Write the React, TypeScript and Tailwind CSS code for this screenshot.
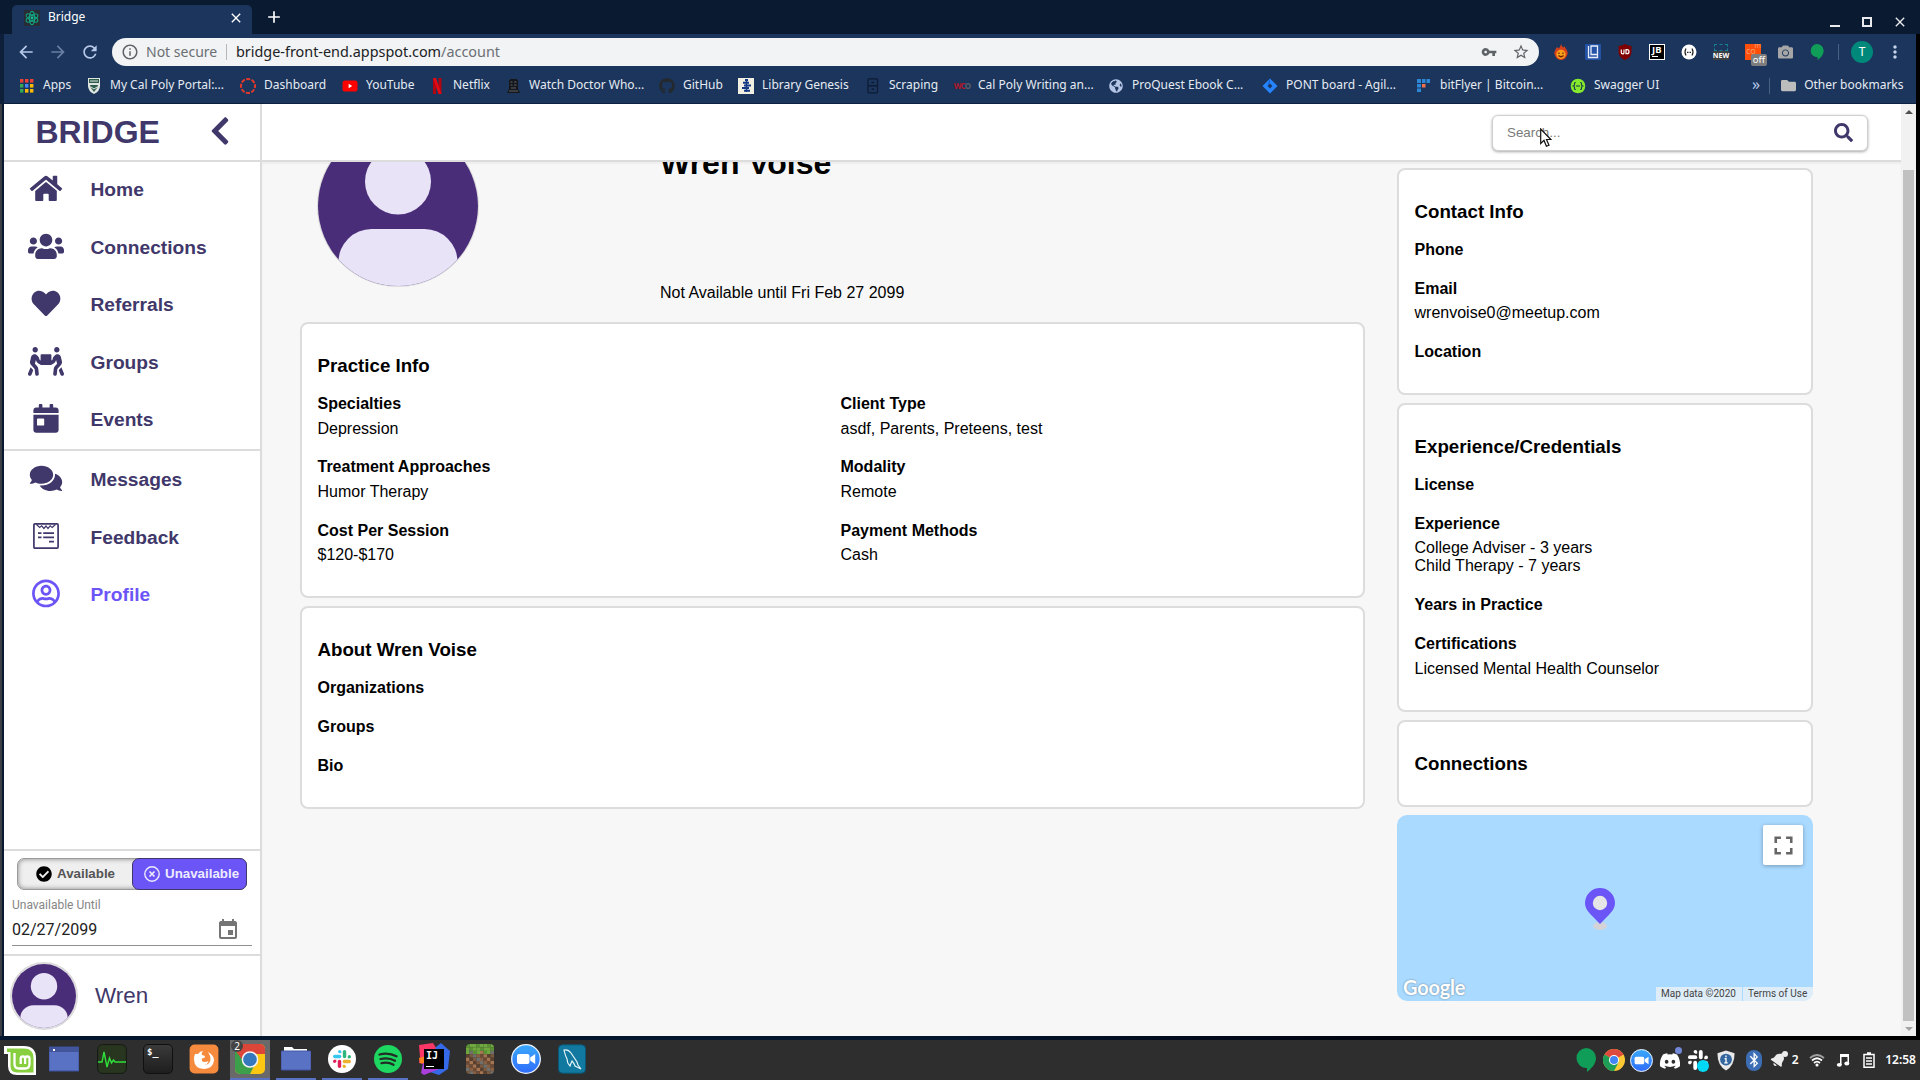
import React from "react";
import {
  FaHome, FaUsers, FaHeart, FaPeopleCarry, FaCalendarDay, FaComments, FaRegUserCircle, FaChevronLeft,
  FaSearch, FaCheckCircle, FaGithub, FaBluetoothB, FaDiscord, FaFolder, FaGlobeAmericas, FaCamera, FaBell,
} from "react-icons/fa";
import {
  MdArrowBack, MdArrowForward, MdRefresh, MdStarBorder, MdVpnKey, MdInfoOutline, MdMoreVert, MdFullscreen,
  MdEvent, MdClose, MdAdd,
} from "react-icons/md";

const SANS = "font-['Liberation_Sans',Arial,sans-serif]";
const NOTO = "font-['Noto_Sans',sans-serif]";

/* ---------- small drawings ---------- */

function ReactFavicon() {
  return (
    <svg viewBox="0 0 16 16" className="h-4 w-4">
      <rect width="16" height="16" fill="#282c34" />
      <g fill="none" stroke="#12a37f" strokeWidth="1.1">
        <ellipse cx="8" cy="8" rx="6.6" ry="2.6" transform="rotate(30 8 8)" />
        <ellipse cx="8" cy="8" rx="6.6" ry="2.6" transform="rotate(90 8 8)" />
        <ellipse cx="8" cy="8" rx="6.6" ry="2.6" transform="rotate(150 8 8)" />
      </g>
      <circle cx="8" cy="8" r="1.4" fill="#19c39a" />
    </svg>
  );
}

function AppsGrid() {
  const colors = ["#ea4335", "#ea4335", "#ea4335", "#34a853", "#4285f4", "#fbbc05", "#34a853", "#fbbc05", "#fbbc05"];
  return (
    <svg viewBox="0 0 16 16" className="h-4 w-4">
      {colors.map((c, i) => (
        <rect key={i} x={1 + (i % 3) * 5} y={1 + Math.floor(i / 3) * 5} width="3.4" height="3.6" fill={c} />
      ))}
    </svg>
  );
}

function CalPoly() {
  return (
    <svg viewBox="0 0 16 16" className="h-4 w-4">
      <path d="M2 0h12v8q0 5-6 8-6-3-6-8z" fill="#dfe6e0" />
      <path d="M3 1h10v4H3z" fill="#2d5c4c" />
      <path d="M4 3h8" stroke="#dfe6e0" strokeWidth="1" />
      <path d="M4 7h8l-1 3-3 4-3-4z" fill="#2d5c4c" />
      <path d="M5 9l3 2 3-2" stroke="#dfe6e0" fill="none" />
    </svg>
  );
}

function CanvasRing() {
  return (
    <svg viewBox="0 0 16 16" className="h-4 w-4">
      <circle cx="8" cy="8" r="7" fill="none" stroke="#e4392b" strokeWidth="2" strokeDasharray="4.1 1.4" strokeDashoffset="2" />
    </svg>
  );
}

function YouTubeIcon() {
  return (
    <svg viewBox="0 0 16 16" className="h-4 w-4">
      <rect x="0.5" y="2.5" width="15" height="11" rx="2.6" fill="#f00" />
      <path d="M6.6 5.8v4.4L10.2 8z" fill="#fff" />
    </svg>
  );
}

function NetflixIcon() {
  return (
    <svg viewBox="0 0 16 16" className="h-4 w-4">
      <path d="M4 0h3v16H4zM9.5 0h3v16h-3z" fill="#b1060f" />
      <path d="M4 0h3l5.5 16h-3z" fill="#e50914" />
    </svg>
  );
}

function TardisIcon() {
  return (
    <svg viewBox="0 0 16 16" className="h-4 w-4">
      <path d="M5 1h7v1h1v9l2 4H2l2-4V2h1z" fill="#15171b" />
      <path d="M5.5 4h2M9 4h2.5M5.5 7h2M9 7h2.5M4 13h9M6 10h5" stroke="#61656b" strokeWidth="1" />
    </svg>
  );
}

function LibGen() {
  return (
    <svg viewBox="0 0 16 16" className="h-4 w-4">
      <rect width="16" height="16" fill="#f1efe2" />
      <path d="M7 2h3M5 4.800h6M6 7.500h7M4 10h7M6 12.800h6" stroke="#123a86" strokeWidth="1.900" />
      <path d="M8.500 1v13" stroke="#123a86" strokeWidth="1.500" />
    </svg>
  );
}

function Cabinet() {
  return (
    <svg viewBox="0 0 16 16" className="h-4 w-4">
      <rect x="3" y=".8" width="9.5" height="14" rx=".8" fill="none" stroke="#0d1c33" strokeWidth="1.2" />
      <path d="M3 7.8h9.5M6.5 4.5h2.6M6.5 11.2h2.6" stroke="#0d1c33" strokeWidth="1.5" />
    </svg>
  );
}

function JiraIcon() {
  return (
    <svg viewBox="0 0 16 16" className="h-4 w-4">
      <path d="M8 .5L15.5 8 8 15.5.5 8z" fill="#2684ff" />
      <path d="M8 5.4L10.4 8 8 10.6 5.6 8z" fill="#1b355c" />
      <path d="M8 .5v5L5 8.3z" fill="#1765d8" />
    </svg>
  );
}

function BitFlyer() {
  return (
    <svg viewBox="0 0 16 16" className="h-4 w-4">
      <path d="M1 1h4v4H1zM6 1h3.5v4H6zM10.500 1H14v4h-3.500zM1 6h4v3.500H1zM1 10.500h4V14H1z" fill="#2e86d6" />
      <rect x="6" y="6" width="3.5" height="3.500" fill="#f1714f" />
    </svg>
  );
}

function Swagger() {
  return (
    <svg viewBox="0 0 16 16" className="h-4 w-4">
      <circle cx="8" cy="8" r="7.3" fill="#85ea2d" />
      <path d="M5.800 4.500q-1.500 0-1.300 1.700 0 1.500-1 1.800 1 .3 1 1.800-.2 1.700 1.300 1.700M10.200 4.500q1.500 0 1.300 1.700 0 1.500 1 1.800-1 .3-1 1.800.2 1.700-1.300 1.700M6 8h4" fill="none" stroke="#173647" strokeWidth="1.100" />
    </svg>
  );
}

function WcoIcon() {
  return (
    <span className="flex h-4 w-4 items-center justify-center text-[8px] leading-4 font-bold tracking-[-0.8px] text-[#b1172a]">
      WC<span className="text-[#5a6068]">O</span>
    </span>
  );
}

function Person({ className }: { className: string }) {
  return (
    <svg viewBox="0 0 160 160" className={className}>
      <rect width="160" height="160" fill="#4a2d78" />
      <circle cx="80" cy="55.500" r="33" fill="#e9e3f8" />
      <rect x="20.500" y="103" width="119" height="90" rx="33" fill="#e9e3f8" />
    </svg>
  );
}

function FeedbackIcon() {
  return (
    <svg viewBox="0 0 26 26" className="h-[26px] w-[26px]" fill="none" stroke="#40376a">
      <rect x=".9" y=".9" width="24.200" height="24.200" rx="1" strokeWidth="1.700" />
      <path d="M3.500 1.500l3.200 3 2-1.600 2.200 2.600L13 3l2 2.500 2.200-2.600 2 1.600 3.200-3" strokeWidth="1.200" />
      <path d="M5 10.200h3.500M10.200 10.200H21M5 14.400h3.500M10.200 14.400H21M16 18.700h5" strokeWidth="1.700" />
    </svg>
  );
}

function ZoomIcon({ className }: { className: string }) {
  return (
    <svg viewBox="0 0 30 30" className={className}>
      <defs>
        <linearGradient id="zoomBlue" x1="0" y1="0" x2="0" y2="1">
          <stop offset="0" stopColor="#3aa9fb" />
          <stop offset="1" stopColor="#2f6cfb" />
        </linearGradient>
      </defs>
      <circle cx="15" cy="15" r="14.300" fill="url(#zoomBlue)" stroke="#f1f6ff" strokeWidth="1.300" />
      <rect x="6" y="10" width="12.500" height="10" rx="2" fill="#fff" />
      <path d="M19.200 13.400l5-3.400v10l-5-3.400z" fill="#fff" />
    </svg>
  );
}

function ChromeLogo({ className }: { className: string }) {
  return (
    <svg viewBox="0 0 22 22" className={className}>
      <circle cx="11" cy="11" r="11" fill="#fcc934" />
      <path d="M11 11L1.470 5.500A11 11 0 0 1 20.530 5.500z" fill="#dd4b3e" />
      <path d="M11 11L1.470 5.500A11 11 0 0 0 11 22l4.500-8.500z" fill="#1e9e57" />
      <path d="M11 6h9.800l-.3-.6L11 5z" fill="#dd4b3e" />
      <circle cx="11" cy="11" r="5" fill="#fff" />
      <circle cx="11" cy="11" r="4" fill="#4285f4" />
    </svg>
  );
}

function Slack({ className, mono }: { className: string; mono?: boolean }) {
  const colors = mono ? ["#fff", "#fff", "#fff", "#fff"] : ["#36c5f0", "#2eb67d", "#ecb22e", "#e01e5a"];
  return (
    <svg viewBox="0 0 20 20" className={className}>
      {colors.map((color, i) => (
        <g key={i} fill={color} transform={`rotate(${i * 90} 10 10)`}>
          <rect x="5.600" y="0" width="3.600" height="3.600" rx="1.800" />
          <path d="M7.400 1.800h1.800v1.800H7.400z" />
          <rect x="0" y="5.300" width="9.200" height="3.800" rx="1.900" />
        </g>
      ))}
    </svg>
  );
}

function Hangouts({ className }: { className: string }) {
  return (
    <svg viewBox="0 0 20 24" className={className}>
      <path d="M10 0a10 10 0 0 1 10 10c0 6-5 11-9 14v-4A10 10 0 1 1 10 0z" fill="#0f9d58" />
    </svg>
  );
}

/* ---------- browser chrome ---------- */

function TabStrip() {
  return (
    <div className="flex h-[34px] shrink-0 items-end bg-[#0a1a31]">
      <div className="ml-3 flex h-[29px] w-[240px] items-center rounded-t-[5px] bg-[#1b355c] pl-3 text-white">
        <span className="pb-1">
          <ReactFavicon />
        </span>
        <span className="ml-2 flex-1 pb-[5px] text-[12px] leading-4">Bridge</span>
        <MdClose className="mr-2 mb-1 h-4 w-4" />
      </div>
      <MdAdd className="mb-[7px] ml-3 h-5 w-5 text-white" />
      <div className="flex-1" />
      <div className="mr-3 mb-1 flex items-center text-[#e8eaee]">
        <span className="mt-[7px] mr-[22px] h-[2px] w-[10px] bg-[#e8eaee]" />
        <span className="mr-[20px] h-[10px] w-[10px] border-2 border-[#e8eaee]" />
        <MdClose className="h-4 w-4" />
      </div>
    </div>
  );
}

function Extensions() {
  const cell = "flex w-8 justify-center";
  return (
    <div className="flex items-center">
      <div className={cell}>
        <svg viewBox="0 0 16 16" className="h-4 w-4">
          <path d="M8 0q.5 2.500 2.500 3.500L12 2q-.3 2 1.500 3.500 2 3 .5 6-2 4.500-6 4.500t-6-4.500q-1.500-3 .5-6L4 3l1.500 1.500Q7.500 3 8 0z" fill="#d8401c" />
          <circle cx="8" cy="10.300" r="4.600" fill="#f9a01b" />
          <path d="M6 8.500v1.500M10 8.500v1.500M5.500 11.500q2.500 2.500 5 0" stroke="#6b1b0c" strokeWidth="1.200" fill="none" />
        </svg>
      </div>
      <div className={cell}>
        <svg viewBox="0 0 16 16" className="h-4 w-4">
          <rect width="16" height="16" rx="1" fill="#2453a5" />
          <path d="M3.500 2v11.500h9V2H6v8.500h6.500" fill="none" stroke="#e9eefa" strokeWidth="1.300" />
        </svg>
      </div>
      <div className={cell}>
        <svg viewBox="0 0 16 16" className="h-4 w-4">
          <path d="M8 0q3 2 6.500 2v6q0 5-6.500 8-6.500-3-6.500-8V2Q5 2 8 0z" fill="#800000" />
          <path d="M4.300 5.500v3q0 1.300 1.400 1.300T7 8.500v-3M9 5.700h1q2 0 2 2t-2 2H9z" fill="none" stroke="#fff" strokeWidth="1.200" />
        </svg>
      </div>
      <div className={cell}>
        <span className="relative h-4 w-4 border border-white bg-black pl-[2px] text-[9.500px] leading-[9px] font-bold text-white">
          JB
          <span className="absolute bottom-[2px] left-[2px] h-px w-[6px] bg-white" />
        </span>
      </div>
      <div className={cell}>
        <svg viewBox="0 0 16 16" className="h-4 w-4">
          <circle cx="8" cy="8" r="7.500" fill="#fff" />
          <path d="M5 4.500Q3 8 5 11.500M11 4.500q2 3.500 0 7" stroke="#222" strokeWidth="1.200" fill="none" />
          <path d="M6 8.300h4" stroke="#222" strokeWidth="1.200" strokeDasharray="1 .5" />
        </svg>
      </div>
      <div className={cell}>
        <span className="flex h-4 w-4 flex-col items-center">
          <span className="h-[7px] w-[14px] border border-dashed border-[#168093]" />
          <span className="flex h-[9px] w-4 items-center justify-center bg-[#3c4043] text-[7px] leading-[9px] font-bold text-white">NEW</span>
        </span>
      </div>
      <div className={cell}>
        <span className="relative h-4 w-4 bg-[#ff4f0a] text-[9px] leading-[10px] text-[#ff9a6d]">
          <span className="absolute top-[3px] left-px leading-[8px]">co</span>
          <span className="absolute -top-[2px] right-0 text-[7px] leading-[8px]">m</span>
          <span className="absolute top-[10px] left-[6px] flex h-3 w-4 items-center justify-center rounded-[2px] bg-[#7d7d7d] text-[9.500px] leading-3 text-white">off</span>
        </span>
      </div>
      <div className={cell}>
        <FaCamera className="h-4 w-[15px] text-[#a6a6a6]" />
      </div>
      <div className={cell}>
        <Hangouts className="h-4 w-[14px]" />
      </div>
      <span className="ml-[5px] h-4 w-px bg-[#4a6083]" />
      <span className="ml-3 flex h-[22px] w-[22px] items-center justify-center rounded-full bg-[#00897b] text-[12px] leading-none text-white">T</span>
      <MdMoreVert className="ml-3 h-5 w-5 text-[#c6d3ea]" />
    </div>
  );
}

function Toolbar() {
  return (
    <div className="flex h-9 shrink-0 items-center text-[#b7c9ea]">
      <MdArrowBack className="ml-3 h-5 w-5" />
      <MdArrowForward className="ml-3 h-5 w-5 opacity-50" />
      <MdRefresh className="ml-3 h-5 w-5" />
      <div className="ml-3 flex h-7 w-[1427px] items-center rounded-full bg-[#f1f3f4] text-[14px] leading-5 text-[#6b6f74]">
        <MdInfoOutline className="ml-[9px] h-[18px] w-[18px] text-[#5f6368]" />
        <span className="ml-[7px] w-[73px]">Not secure</span>
        <span className="ml-[7px] h-4 w-px bg-[#b4b7bb]" />
        <span className="ml-[9px] text-[14.400px] text-[#202124]">
          bridge-front-end.appspot.com<span className="text-[#6b6f74]">/account</span>
        </span>
        <span className="flex-1" />
        <MdVpnKey className="h-4 w-4 text-[#5f6368]" />
        <MdStarBorder className="mr-[9px] ml-[15px] h-[18px] w-[18px] text-[#5f6368]" />
      </div>
      <div className="ml-[6px]">
        <Extensions />
      </div>
    </div>
  );
}

const bookmarks: { label: string; w: string; icon: React.ReactNode }[] = [
  { label: "Apps", w: "w-[67px]", icon: <AppsGrid /> },
  { label: "My Cal Poly Portal:...", w: "w-[154px]", icon: <CalPoly /> },
  { label: "Dashboard", w: "w-[102px]", icon: <CanvasRing /> },
  { label: "YouTube", w: "w-[87px]", icon: <YouTubeIcon /> },
  { label: "Netflix", w: "w-[76px]", icon: <NetflixIcon /> },
  { label: "Watch Doctor Who...", w: "w-[154px]", icon: <TardisIcon /> },
  { label: "GitHub", w: "w-[79px]", icon: <FaGithub className="h-4 w-4 text-[#24292e]" /> },
  { label: "Library Genesis", w: "w-[127px]", icon: <LibGen /> },
  { label: "Scraping", w: "w-[89px]", icon: <Cabinet /> },
  { label: "Cal Poly Writing an...", w: "w-[154px]", icon: <WcoIcon /> },
  { label: "ProQuest Ebook C...", w: "w-[154px]", icon: <FaGlobeAmericas className="mx-px h-[14px] w-[14px] text-[#b4c5e6]" /> },
  { label: "PONT board - Agil...", w: "w-[154px]", icon: <JiraIcon /> },
  { label: "bitFlyer | Bitcoin...", w: "w-[154px]", icon: <BitFlyer /> },
  { label: "Swagger UI", w: "w-[182px]", icon: <Swagger /> },
];

function Bookmarks() {
  return (
    <div className="flex h-[34px] shrink-0 items-center border-b border-[#0f2140] pb-[2px] pl-[15px] text-[12px] leading-4 whitespace-nowrap text-[#e6ebf3]">
      {bookmarks.map((b) => (
        <div key={b.label} className={`flex shrink-0 items-center gap-2 ${b.w}`}>
          <span className="shrink-0">{b.icon}</span>
          <span className="pb-px">{b.label}</span>
        </div>
      ))}
      <span className="pb-1 text-[16px] text-[#b7c9ea]">»</span>
      <span className="ml-[9px] h-4 w-px bg-[#4a6083]" />
      <FaFolder className="ml-[11px] h-[15px] w-[15px] text-[#bdbdbd]" />
      <span className="ml-2 pb-px">Other bookmarks</span>
    </div>
  );
}

/* ---------- page ---------- */

function NavItem({ icon, label, active }: { icon: React.ReactNode; label: string; active?: boolean }) {
  return (
    <div className={`flex h-[57.500px] items-center ${active ? "text-[#6b55f7]" : "text-[#40376a]"}`}>
      <span className="ml-6 flex w-9 justify-center">{icon}</span>
      <span className="mt-[3px] ml-[26.500px] text-[19.200px] leading-[22px] font-bold">{label}</span>
    </div>
  );
}

const navIcon = "h-[28.800px] w-9";

function Sidebar() {
  return (
    <aside className="flex w-[258px] shrink-0 flex-col border-r-2 border-[#dcdcdc] bg-white shadow-[1px_0_3px_rgba(0,0,0,0.12)]">
      <div className="flex h-[58px] shrink-0 items-center border-b-2 border-[#dcdcdc] text-[#40376a]">
        <span className="ml-[31.500px] w-[174px] text-[32px] leading-9 font-bold">BRIDGE</span>
        <FaChevronLeft className="h-8 w-5 -translate-y-px" />
      </div>
      <div className="-mt-[2px] h-[291px] shrink-0 border-b-2 border-[#dcdcdc]">
        <NavItem icon={<FaHome className={navIcon} />} label="Home" />
        <NavItem icon={<FaUsers className={navIcon} />} label="Connections" />
        <NavItem icon={<FaHeart className={navIcon} />} label="Referrals" />
        <NavItem icon={<FaPeopleCarry className={navIcon} />} label="Groups" />
        <NavItem icon={<FaCalendarDay className={navIcon} />} label="Events" />
      </div>
      <div className="-mt-px flex-1">
        <NavItem icon={<FaComments className={navIcon} />} label="Messages" />
        <NavItem icon={<FeedbackIcon />} label="Feedback" />
        <NavItem icon={<FaRegUserCircle className={navIcon} />} label="Profile" active />
      </div>
      <div className="h-[105px] shrink-0 border-t-2 border-[#dcdcdc] pt-[7px]">
        <div className="ml-[13px] flex h-8 w-[230px] rounded-[7px] border border-[#9b9b9b] bg-[#efefef] text-[13.333px] font-bold shadow-[inset_0_0_5px_rgba(0,0,0,0.45)]">
          <div className="flex w-[114px] items-center pl-[18px] text-[#555]">
            <FaCheckCircle className="mr-[5px] h-4 w-4 text-black" />
            Available
          </div>
          <div className="-my-px -mr-px flex w-[115px] flex-1 items-center rounded-[7px] border border-[#40376a] bg-[#6b55f7] pl-[11px] text-[#eeebff]">
            <svg viewBox="0 0 16 16" className="mr-[5px] h-4 w-4 shrink-0" fill="none" stroke="currentColor">
              <circle cx="8" cy="8" r="7.200" strokeWidth="1.400" />
              <path d="M5.500 5.500l5 5M10.500 5.500l-5 5" strokeWidth="1.700" />
            </svg>
            Unavailable
          </div>
        </div>
        <div className="mr-2 ml-2 h-[56px] border-b border-[#8f8f8f] font-['Roboto',sans-serif]">
          <div className="pt-[7px] text-[12px] leading-4 text-[#858585]">Unavailable Until</div>
          <div className="mt-[5px] flex items-center justify-between pr-[12px] text-[16px] leading-6 text-[#212121]">
            02/27/2099
            <MdEvent className="h-6 w-6 text-[#757575]" />
          </div>
        </div>
      </div>
      <div className="flex h-[82px] shrink-0 items-center border-t-2 border-[#dcdcdc] pl-[6px]">
        <div className="h-[68px] w-[68px] overflow-hidden rounded-full border-2 border-[#dcdcdc]">
          <Person className="h-16 w-16" />
        </div>
        <span className="ml-[17px] text-[22.400px] leading-7 text-[#40376a]">Wren</span>
      </div>
    </aside>
  );
}

function Field({ label, values = [] }: { label: string; values?: string[] }) {
  return (
    <div className="mb-[20.800px] text-[16px] leading-[18px] text-black">
      <div className="font-bold">{label}</div>
      {values.length > 0 && (
        <div className="mt-[6.600px]">
          {values.map((v) => (
            <div key={v}>{v}</div>
          ))}
        </div>
      )}
    </div>
  );
}

function Card({ title, className, children }: { title: string; className: string; children?: React.ReactNode }) {
  return (
    <section className={`shrink-0 rounded-lg border-2 border-[#dcdcdc] bg-white pt-[30.500px] pl-[15.500px] ${className}`}>
      <h3 className="mb-[18.500px] text-[18.720px] leading-[22px] font-bold text-black">{title}</h3>
      {children}
    </section>
  );
}

function MapView() {
  return (
    <div className="relative h-[186px] w-[416px] shrink-0 overflow-hidden rounded-[10px] bg-[#aadaff]">
      <div className="absolute top-[10px] right-[10px] flex h-10 w-10 items-center justify-center rounded-[2px] bg-white shadow-[0_1px_4px_rgba(0,0,0,0.3)]">
        <MdFullscreen className="h-[31px] w-[31px] text-[#666]" />
      </div>
      <svg viewBox="0 0 30 42" className="absolute top-[73px] left-[188px] h-[42px] w-[30px]">
        <ellipse cx="15" cy="38" rx="7" ry="4" fill="#d3d3d8" />
        <path d="M15 0a15 15 0 0 1 15 15c0 5-3.200 8.800-6.500 12.200L15 36l-8.500-8.800C3.200 23.800 0 20 0 15A15 15 0 0 1 15 0z" fill="#6b55f7" />
        <circle cx="15" cy="15" r="7.200" fill="#e6e6e6" />
      </svg>
      <div className="absolute bottom-[2px] left-[6px] font-['Lato',sans-serif] text-[20px] leading-6 font-bold tracking-[-0.200px] text-white [text-shadow:0_0_2px_rgba(0,0,0,0.45)]">
        Google
      </div>
      <div className="absolute right-0 bottom-0 flex h-[14px] gap-px font-['Roboto',sans-serif] text-[10px] leading-[14px] whitespace-nowrap text-[#444]">
        <span className="w-[86px] bg-[#f5f5f5]/70 pl-[5px]">Map data ©2020</span>
        <span className="w-[70px] bg-[#f5f5f5]/70 pl-[5px]">Terms of Use</span>
      </div>
    </div>
  );
}

function Profile() {
  return (
    <div className="flex flex-1 overflow-hidden bg-[#f7f7f7] pl-[38px] shadow-[inset_0_2px_2px_rgba(0,0,0,0.04)]">
      <div className="w-[1065px] shrink-0">
        <div className="-mt-[37px] flex h-[197px] pl-[16.500px]">
          <div className="h-[162px] w-[162px] overflow-hidden rounded-full border-[1.500px] border-[#dadada]">
            <Person className="h-40 w-40" />
          </div>
          <div className="ml-[181.500px]">
            <div className="mt-[20px] text-[32px] leading-9 font-bold text-black">Wren Voise</div>
            <div className="mt-[103px] text-[16px] leading-[18px] text-black">Not Available until Fri Feb 27 2099</div>
          </div>
        </div>
        <Card title="Practice Info" className="h-[276px]">
          <div className="grid grid-cols-[523px_1fr]">
            <Field label="Specialties" values={["Depression"]} />
            <Field label="Client Type" values={["asdf, Parents, Preteens, test"]} />
            <Field label="Treatment Approaches" values={["Humor Therapy"]} />
            <Field label="Modality" values={["Remote"]} />
            <Field label="Cost Per Session" values={["$120-$170"]} />
            <Field label="Payment Methods" values={["Cash"]} />
          </div>
        </Card>
        <Card title="About Wren Voise" className="mt-2 h-[203px]">
          <Field label="Organizations" />
          <Field label="Groups" />
          <Field label="Bio" />
        </Card>
      </div>
      <div className="ml-8 flex w-[416px] shrink-0 flex-col gap-2 pt-[6px]">
        <Card title="Contact Info" className="h-[227px]">
          <Field label="Phone" />
          <Field label="Email" values={["wrenvoise0@meetup.com"]} />
          <Field label="Location" />
        </Card>
        <Card title="Experience/Credentials" className="h-[309px]">
          <Field label="License" />
          <Field label="Experience" values={["College Adviser - 3 years", "Child Therapy - 7 years"]} />
          <Field label="Years in Practice" />
          <Field label="Certifications" values={["Licensed Mental Health Counselor"]} />
        </Card>
        <Card title="Connections" className="h-[87px]" />
        <MapView />
      </div>
    </div>
  );
}

function Scrollbar() {
  return (
    <div className="flex w-[15px] shrink-0 flex-col items-center bg-[#f1f1f1]">
      <div className="flex h-[66px] pt-[6px]">
        <svg viewBox="0 0 8 4" className="h-1 w-2"><path d="M0 4l4-4 4 4z" fill="#505050" /></svg>
      </div>
      <div className="w-[11px] flex-1 bg-[#c1c1c1]" />
      <div className="flex h-[15px] items-center">
        <svg viewBox="0 0 8 4" className="h-1 w-2"><path d="M0 0h8L4 4z" fill="#a3a3a3" /></svg>
      </div>
    </div>
  );
}

function Page() {
  return (
    <div className={`flex h-[932px] shrink-0 ${SANS}`}>
      <Sidebar />
      <main className="flex flex-1 flex-col overflow-hidden">
        <header className="flex h-[58px] shrink-0 items-center justify-end border-b-2 border-[#dcdcdc] bg-white pr-[33px]">
          <div className="relative mt-px flex h-[36px] w-[376px] items-center justify-between rounded-[6px] border border-[#d0d0d0] bg-white pr-[14px] pl-[14px] shadow-[0_1px_3px_rgba(0,0,0,0.35)]">
            <span className="pt-px text-[13.333px] leading-4 text-[#7a7a7a]">Search...</span>
            <FaSearch className="h-[19px] w-[19px] text-[#40376a]" />
            <svg viewBox="0 0 12 20" className="absolute top-[12px] left-[47px] h-5 w-3">
              <path d="M.7 1v14.500l3.300-3.100 2.400 5.900 2.600-1.100-2.500-5.700h4.400z" fill="#fff" stroke="#111" strokeWidth="1.200" />
            </svg>
          </div>
        </header>
        <Profile />
      </main>
      <Scrollbar />
    </div>
  );
}

/* ---------- taskbar ---------- */

const BLOCKS = ["#8a6045", "#6d4a34", "#a57552", "#59402f", "#7b5a41", "#6f6f6c"];

const taskIcons: { icon: React.ReactNode; state?: "open" | "active" }[] = [
  {
    icon: (
      <svg viewBox="0 0 30 28" className="h-7 w-[30px]">
        <rect x="0" y="2" width="30" height="24" fill="#5a72c4" stroke="#3b51a0" />
        <rect x="0" y="2" width="30" height="5" fill="#42559a" />
        <rect x="4" y="4" width="2" height="2" fill="#fff" />
      </svg>
    ),
  },
  {
    icon: (
      <svg viewBox="0 0 30 30" className="h-[30px] w-[30px]">
        <rect x=".6" y=".6" width="28.800" height="28.800" rx="5" fill="#28351f" stroke="#161a14" />
        <path d="M1 18h4l2-10 3 15 2.500-9 2 5 2-3 1.500 2h11" stroke="#2fe03a" strokeWidth="1.400" fill="none" />
      </svg>
    ),
  },
  {
    icon: (
      <span className="h-[30px] w-[30px] rounded-[5px] border border-[#101010] bg-gradient-to-b from-[#3a3a3a] to-[#1e1e1e] pl-[3px] font-['DejaVu_Sans_Mono',monospace] text-[9px] leading-[14px] font-bold text-white">
        $<span className="text-[10px]">_</span>
      </span>
    ),
  },
  {
    icon: (
      <svg viewBox="0 0 30 30" className="h-[30px] w-[30px]">
        <rect x=".6" y=".6" width="28.800" height="28.800" rx="5" fill="#f68b3e" />
        <path d="M6 10l3 0q2-3 5-3-2 2-1 4l3 1q0 2-3 2.500-1 3 2 3.500 3 0 4.500-1-1 4-5 4 6 0 7-5 .5-4-2.500-8 6 3 6 8.500Q24 24.500 15 25 5.500 24.500 5 16q0-4 1-6z" fill="#fff" />
      </svg>
    ),
  },
  {
    state: "active",
    icon: (
      <span className="relative h-[30px] w-[30px]">
        <svg viewBox="0 0 30 30" className="h-[30px] w-[30px]">
          <defs><clipPath id="chromeTile"><rect width="30" height="30" rx="5" /></clipPath></defs>
          <g clipPath="url(#chromeTile)">
            <rect width="30" height="30" fill="#fbc713" />
            <path d="M0 0h30v10H15L8 18 0 7z" fill="#dc4639" />
            <path d="M0 6l9 12 11 2-5 10H0z" fill="#3ba049" />
          </g>
          <circle cx="15" cy="15.500" r="7.600" fill="#3678bd" stroke="#f3f3f3" strokeWidth="1.500" />
        </svg>
        <span className="absolute -top-[4px] -left-[4px] flex h-3 w-3 items-center justify-center rounded-full bg-[#444] text-[10px] leading-3 text-white">2</span>
      </span>
    ),
  },
  {
    state: "open",
    icon: (
      <svg viewBox="0 0 30 28" className="h-7 w-[30px]">
        <path d="M3 2h8l2 2h13v5H3z" fill="#fff" />
        <rect x="0" y="6" width="30" height="19" rx="1" fill="#5a72c4" stroke="#4057a8" />
      </svg>
    ),
  },
  {
    state: "open",
    icon: (
      <span className="flex h-7 w-7 items-center justify-center rounded-full bg-white">
        <Slack className="h-[18px] w-[18px]" />
      </span>
    ),
  },
  {
    state: "open",
    icon: (
      <svg viewBox="0 0 28 28" className="h-7 w-7">
        <circle cx="14" cy="14" r="14" fill="#1ed760" />
        <path d="M5.500 9.500q9-2.500 17 1.800M6.500 14q8-2 14.500 1.700M7.500 18.200q6.500-1.500 12 1.500" stroke="#222d26" strokeWidth="2.300" strokeLinecap="round" fill="none" />
      </svg>
    ),
  },
  {
    icon: (
      <span className="relative flex h-8 w-8 items-center justify-center">
        <svg viewBox="0 0 32 32" className="absolute inset-0 h-8 w-8">
          <path d="M1 2l14-2 5 8-10 14-9-2 1-6z" fill="#fb3768" />
          <path d="M1 15l7-2v8l-6-1z" fill="#fc801d" />
          <path d="M18 4l5-4 9 8-2 18-9 6-12-4z" fill="#3569e8" />
          <path d="M5 20l16 6-15 6-3-2z" fill="#a93fd8" />
        </svg>
        <span className="relative h-5 w-5 bg-black pl-[2px] font-['DejaVu_Sans_Mono',monospace] text-[10px] leading-[13px] font-bold text-white">
          IJ
          <span className="absolute bottom-[2px] left-[2px] h-px w-[8px] bg-white" />
        </span>
      </span>
    ),
  },
  {
    icon: (
      <svg viewBox="0 0 28 30" className="h-[30px] w-7">
        <defs><clipPath id="blockTile"><rect width="28" height="30" rx="4" /></clipPath></defs>
        <g clipPath="url(#blockTile)">
          {Array.from({ length: 72 }, (_, i) => {
            const col = i % 8;
            const row = Math.floor(i / 8);
            const grass = row < 2 || (row === 2 && col % 3 !== 1);
            const fill = grass ? ((i * 5) % 3 ? "#6fa83f" : "#5a9133") : BLOCKS[(i * 7 + row * 3) % 6];
            return <rect key={i} x={col * 3.5} y={row * 3.4} width="3.600" height="3.500" fill={fill} />;
          })}
        </g>
      </svg>
    ),
  },
  { icon: <ZoomIcon className="h-[30px] w-[30px]" /> },
  {
    icon: (
      <svg viewBox="0 0 28 30" className="h-[30px] w-7">
        <rect x=".5" y=".8" width="27" height="28.400" rx="4" fill="#11799f" stroke="#0a5674" />
        <path d="M6 6q4-1 7 3l6 9 1 3 3 4-4-2-2-1q-1-3-3-5-1 2-2 5-3-3-3-7-2-4-3-9z" fill="none" stroke="#e6f3f8" strokeWidth="1.200" />
      </svg>
    ),
  },
];

function Tray() {
  const cell = "flex w-7 justify-center";
  return (
    <div className="flex items-center text-white">
      <div className={cell}><Hangouts className="h-6 w-5" /></div>
      <div className={cell}><ChromeLogo className="h-[22px] w-[22px]" /></div>
      <div className={cell}><ZoomIcon className="h-[23px] w-[23px]" /></div>
      <div className={cell}>
        <span className="relative">
          <FaDiscord className="h-[22px] w-[22px] translate-y-px" />
          <span className="absolute -top-[2px] -right-px h-[7px] w-[7px] rounded-full bg-[#7289da]" />
        </span>
      </div>
      <div className={cell}>
        <span className="relative">
          <Slack className="h-[20px] w-[20px]" mono />
          <span className="absolute -right-px -bottom-[2px] h-3 w-3 rounded-full bg-[#00d9f5]" />
        </span>
      </div>
      <div className={cell}>
        <svg viewBox="0 0 20 22" className="h-[21px] w-5">
          <path d="M10 .5l9 3q0 13-9 18-9-5-9-18z" fill="#e9e9e9" />
          <circle cx="10" cy="10" r="6.200" fill="#34669f" />
          <path d="M10 5.800v1.700M8.500 9H10v4.500M8.200 13.500h3.600" stroke="#fff" strokeWidth="1.400" fill="none" />
        </svg>
      </div>
      <div className={cell}>
        <span className="flex h-[21px] w-4 items-center justify-center rounded-[8px] bg-[#3d6eb5]">
          <FaBluetoothB className="h-4 w-4" />
        </span>
      </div>
      <span className="relative ml-[3px] flex h-4 w-4">
        <FaBell className="h-[15px] w-[15px] rotate-[35deg] text-[#ececec]" />
        <span className="absolute -top-px -right-px h-[6px] w-[6px] rounded-full bg-[#ececec]" />
      </span>
      <span className="ml-[5px] w-2 text-[12px] leading-4 font-semibold">2</span>
      <svg viewBox="0 0 16 14" className="ml-[9px] h-[14px] w-4" fill="none" stroke="#fff" strokeWidth="1.700">
        <path d="M1 5q7-6 14 0" opacity=".55" />
        <path d="M3 7.500q5-4.500 10 0M5 10q3-2.700 6 0" />
        <circle cx="8" cy="12" r=".7" />
      </svg>
      <svg viewBox="0 0 14 14" className="ml-[11px] h-[14px] w-[14px]" fill="#fff">
        <path d="M4 1h9v10h-1.500V4h-6v8H4z" />
        <ellipse cx="3.300" cy="11.800" rx="2.500" ry="1.900" />
        <ellipse cx="10.800" cy="10.500" rx="2.500" ry="1.900" />
      </svg>
      <svg viewBox="0 0 12 16" className="ml-[13px] h-4 w-3" fill="none" stroke="#fff" strokeWidth="1.500">
        <path d="M1 2.500h10v12.700H1zM4 1h4" />
        <path d="M3 6h6M3 9h6M3 12h6" />
      </svg>
      <span className="ml-[10.500px] text-[12px] leading-4 font-semibold whitespace-nowrap">12:58</span>
    </div>
  );
}

function Taskbar() {
  return (
    <div className="flex h-10 shrink-0 bg-[#2e2e2e]">
      <div className="flex w-10 items-center pl-1">
        <svg viewBox="0 0 32 29" className="h-[29px] w-8">
          <path d="M0 0h20q12 0 12 12v17H13Q4 29 4 20V8H0z" fill="#fff" />
          <path d="M3 2.500h17q9.500 0 9.500 9.500v14.500H13Q6.500 26.500 6.500 20V6H3z" fill="#87cf3e" />
          <path d="M10.500 7v11q0 4.500 4.500 4.500h6q4.500 0 4.500-4.500v-5.500q0-2-2.200-2t-2.200 2V18v-5.500q0-2-2.200-2t-2.200 2V18" fill="none" stroke="#fff" strokeWidth="2.300" />
        </svg>
      </div>
      <div className="ml-px flex">
        {taskIcons.map((t, i) => (
          <div
            key={i}
            className={`flex h-10 items-center justify-center ${i === 0 ? "mr-[2px] w-[46px]" : "mx-[3px] w-10"} ${
              t.state === "active" ? "border-b-2 border-[#5a72c4] bg-[#696969]" : t.state === "open" ? "border-b-2 border-[#5a72c4]" : "border-b-2 border-transparent"
            }`}
          >
            {t.icon}
          </div>
        ))}
      </div>
      <div className="flex-1" />
      <div className={`flex items-center pr-[4px] ${NOTO}`}>
        <Tray />
      </div>
    </div>
  );
}

export default function App() {
  return (
    <div className="flex h-[1080px] w-[1920px] flex-col overflow-hidden bg-black">
      <div className={`flex shrink-0 flex-col ${NOTO}`}>
        <TabStrip />
        <div className="flex">
          <div className="w-1 bg-[#0d1f39]" />
          <div className="w-[1912px] bg-[#1b355c]">
            <Toolbar />
            <Bookmarks />
          </div>
        </div>
      </div>
      <div className="flex">
        <div className="w-1 border-l-2 border-[#3b3f45] bg-[#0a1a31]" />
        <div className="w-[1912px]">
          <Page />
        </div>
      </div>
      <div className="h-1 shrink-0 bg-gradient-to-r from-[#04152e] via-[#04152e] to-black" />
      <Taskbar />
    </div>
  );
}
